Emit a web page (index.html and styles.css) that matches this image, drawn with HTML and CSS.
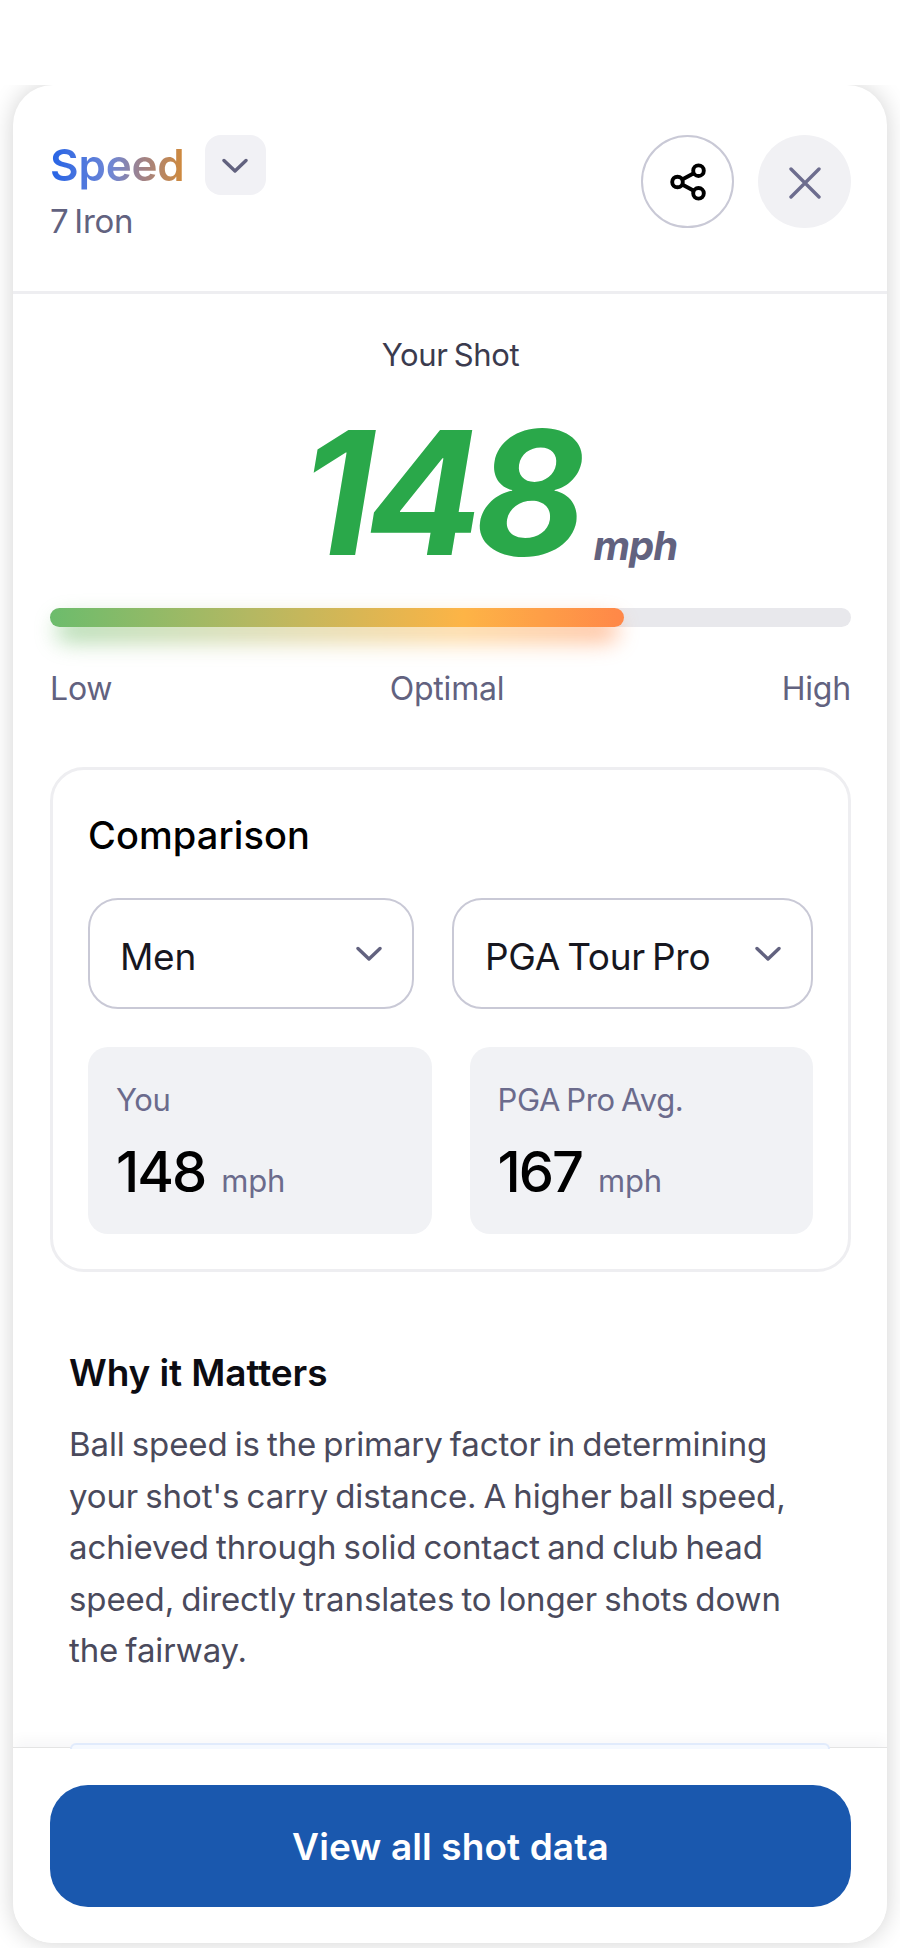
FILE: index.html
```html
<!DOCTYPE html>
<html>
<head>
<meta charset="utf-8"/>
<title>Speed - 7 Iron</title>
<link rel="stylesheet" href="styles.css">
</head>

<body>
<div class="clip">
<div class="sheet">

<header class="head">
  <div class="head-left">
    <div class="title-row">
      <h1 class="title">Speed</h1>
      <button class="title-btn">
        <svg width="26" height="16" viewBox="0 0 26 16"><path class="chev" d="M2 2.5 13 13 24 2.5"/></svg>
      </button>
    </div>
    <div class="club">7 Iron</div>
  </div>
  <div class="head-right">
    <button class="round share">
      <svg width="36" height="38" viewBox="0 0 36 38"><g class="share-icon">
        <circle cx="7.5" cy="19" r="5.3"/>
        <circle cx="28.5" cy="7.7" r="5.3"/>
        <circle cx="28.5" cy="30.3" r="5.3"/>
        <path d="M12.2 16.5 23.8 10.2M12.2 21.5 23.8 27.8"/>
      </g></svg>
    </button>
    <button class="round close">
      <svg width="32" height="32" viewBox="0 0 32 32"><path class="cross" d="M2 2 30 30M30 2 2 30"/></svg>
    </button>
  </div>
</header>

<main class="body">
  <section class="shot">
    <div class="shot-label">Your Shot</div>
    <div class="reading"><span class="big">148</span><span class="unit">mph</span></div>
    <div class="track"><div class="glow"></div><div class="fill"></div></div>
    <div class="scale"><span>Low</span><span>Optimal</span><span>High</span></div>
  </section>

  <section class="compare">
    <h2 class="compare-title">Comparison</h2>
    <div class="selects">
      <div class="select men">Men
        <svg width="26" height="16" viewBox="0 0 26 16"><path class="chev" d="M2 2.5 13 13 24 2.5"/></svg>
      </div>
      <div class="select tour">PGA Tour Pro
        <svg width="26" height="16" viewBox="0 0 26 16"><path class="chev" d="M2 2.5 13 13 24 2.5"/></svg>
      </div>
    </div>
    <div class="stats">
      <div class="stat">
        <div class="stat-label">You</div>
        <div class="stat-value"><b>148</b><span>mph</span></div>
      </div>
      <div class="stat">
        <div class="stat-label">PGA Pro Avg.</div>
        <div class="stat-value"><b>167</b><span>mph</span></div>
      </div>
    </div>
  </section>

  <section class="why">
    <h2 class="why-title">Why it Matters</h2>
    <p>Ball speed is the primary factor in determining your shot's carry distance. A higher ball speed, achieved through solid contact and club head speed, directly translates to longer shots down the fairway.</p>
  </section>
</main>

<footer class="foot">
  <div class="next-card"></div>
  <button class="cta">View all shot data</button>
</footer>

</div>
</div>
</body>
</html>
```

FILE: styles.css
```css
* {
   box-sizing: border-box;
}

body {
   margin: 0;
   background-color: white;
   font-family: Inter, "Noto Sans", sans-serif;
   color: #62627f;
}

button {
   border: none;
   padding: 0;
   font-family: inherit;
}

h1, h2, p {
   margin: 0;
}

/* the sheet's shadow is cut off along its top edge */
.clip {
   margin-top: 85px;
   height: 1863px;
   padding: 0 13px 5px;
   overflow: hidden;
}

.sheet {
   height: 1858px;
   display: flex;
   flex-direction: column;
   background-color: white;
   border-radius: 40px;
   box-shadow: 0 0 24px rgba(0, 0, 0, 0.18);
   overflow: hidden;
}

.chev {
   fill: none;
   stroke: #62627f;
   stroke-width: 3.4;
   stroke-linecap: round;
   stroke-linejoin: round;
}

/* header */
.head {
   height: 209px;
   flex: none;
   display: flex;
   justify-content: space-between;
   padding: 50px 36px 0 37px;
   border-bottom: 3px solid #eeeef1;
}

.title-row {
   display: flex;
   align-items: flex-start;
   gap: 20px;
}

.title {
   font-size: 44px;
   line-height: 60px;
   font-weight: 600;
   letter-spacing: -0.2px;
   background: linear-gradient(90deg, #2563e6 0%, #6f87d6 45%, #a08288 68%, #d28a38 100%);
   -webkit-background-clip: text;
   background-clip: text;
   color: transparent;
}

.title-btn {
   width: 61px;
   height: 60px;
   padding-top: 2px;
   display: flex;
   align-items: center;
   justify-content: center;
   background-color: #f1f1f5;
   border-radius: 16px;
}

.club {
   margin-top: 7px;
   font-size: 33px;
   line-height: 38px;
   letter-spacing: -0.3px;
   word-spacing: -3px;
}

.head-right {
   display: flex;
   gap: 24px;
}

.round {
   width: 93px;
   height: 93px;
   display: flex;
   align-items: center;
   justify-content: center;
   border-radius: 50%;
}

.share {
   background-color: white;
   border: 2px solid #c9c9d6;
}

.close {
   padding-top: 3px;
   background-color: #f1f1f4;
}

.share-icon {
   fill: none;
   stroke: black;
   stroke-width: 3.9;
}

.cross {
   fill: none;
   stroke: #6d6d8e;
   stroke-width: 3.4;
   stroke-linecap: round;
}

/* main reading */
.body {
   flex: 1;
   overflow: hidden;
   padding: 0 36px 0 37px;
}

.shot-label {
   margin-top: 43px;
   text-align: center;
   font-size: 31px;
   line-height: 36px;
   letter-spacing: -0.4px;
   word-spacing: -2px;
   color: #3b3b4e;
}

.reading {
   margin-top: 44px;
   height: 150px;
   display: flex;
   align-items: flex-end;
   justify-content: center;
   padding-left: 76px;
}

.big {
   font-size: 172px;
   line-height: 150px;
   font-weight: 700;
   font-style: italic;
   letter-spacing: -8px;
   color: #2aa84a;
}

.unit {
   margin-left: 15px;
   margin-bottom: -2px;
   font-size: 40px;
   line-height: 46px;
   font-weight: 700;
   font-style: italic;
   letter-spacing: -1px;
}

.track {
   position: relative;
   margin-top: 41px;
   height: 19px;
   background-color: #e8e8ec;
   border-radius: 9.5px;
}

.fill {
   position: relative;
   width: 574px;
   height: 19px;
   border-radius: 9.5px;
   background: linear-gradient(90deg, #6cbc6c 0%, #b4b862 35%, #fdb446 72%, #ff8748 100%);
}

.glow {
   position: absolute;
   left: 6px;
   top: 10px;
   width: 562px;
   height: 24px;
   border-radius: 12px;
   background: linear-gradient(90deg, #6cbc6c 0%, #b4b862 35%, #fdb446 72%, #ff8748 100%);
   opacity: 0.55;
   filter: blur(11px);
}

.scale {
   margin-top: 44px;
   display: flex;
   justify-content: space-between;
   font-size: 32px;
   line-height: 36px;
   letter-spacing: -0.2px;
}

/* comparison card */
.compare {
   margin-top: 60px;
   height: 505px;
   padding: 0 35px;
   border: 3px solid #eeeef1;
   border-radius: 34px;
}

.compare-title {
   margin-top: 43px;
   font-size: 38px;
   line-height: 44px;
   font-weight: 500;
   letter-spacing: 0.1px;
   color: black;
}

.selects {
   margin-top: 41px;
   display: flex;
   justify-content: space-between;
}

.select {
   height: 111px;
   display: flex;
   align-items: center;
   justify-content: space-between;
   border: 2.5px solid #c9c9d6;
   border-radius: 30px;
   padding-top: 5px;
   font-size: 37px;
   letter-spacing: -0.3px;
   word-spacing: -3px;
   color: #17171f;
}

.select svg {
   margin-top: -5px;
}

.men {
   width: 326px;
   padding-left: 30px;
   padding-right: 30px;
}

.tour {
   width: 361px;
   padding-left: 31px;
   padding-right: 30px;
}

.stats {
   margin-top: 38px;
   display: grid;
   grid-template-columns: 1fr 1fr;
   gap: 38px;
}

.stat {
   height: 187px;
   padding: 35px 28px 0;
   background-color: #f1f2f5;
   border-radius: 20px;
}

.stat-label {
   font-size: 31px;
   line-height: 36px;
   letter-spacing: -0.4px;
   word-spacing: -2px;
   color: #6b6b8c;
}

.stat-value {
   margin-top: 23px;
   display: flex;
   align-items: baseline;
   gap: 16px;
}

.stat-value b {
   font-size: 56px;
   line-height: 62px;
   font-weight: 500;
   letter-spacing: -2px;
   color: black;
}

.stat-value span {
   font-size: 31px;
   letter-spacing: -0.2px;
   color: #6b6b8c;
}

/* explanation */
.why {
   padding: 0 30px 0 19px;
   margin-top: 79px;
}

.why-title {
   font-size: 37px;
   line-height: 44px;
   font-weight: 600;
   letter-spacing: -0.1px;
   color: #0c0c12;
}

.why p {
   margin-top: 24px;
   font-size: 33px;
   line-height: 51.5px;
   letter-spacing: -0.12px;
   word-spacing: -2px;
   color: #4a4a5c;
}

/* footer */
.foot {
   flex: none;
   position: relative;
   height: 196px;
   padding: 37px 36px 0 37px;
   background-color: white;
   border-top: 1px solid #e4e4e4;
   box-shadow: 0 -6px 14px rgba(30, 30, 50, 0.04);
}

/* top edge of the next card, just showing above the footer */
.next-card {
   position: absolute;
   left: 57px;
   right: 57px;
   top: -5px;
   height: 6px;
   background-color: #f5f9ff;
   border: 2px solid #e1ebfc;
   border-bottom: none;
   border-radius: 6px 6px 0 0;
}

.cta {
   display: block;
   width: 100%;
   height: 122px;
   background-color: #1a58ae;
   border-radius: 38px;
   font-size: 37px;
   font-weight: 600;
   letter-spacing: 0.1px;
   color: white;
}
```
